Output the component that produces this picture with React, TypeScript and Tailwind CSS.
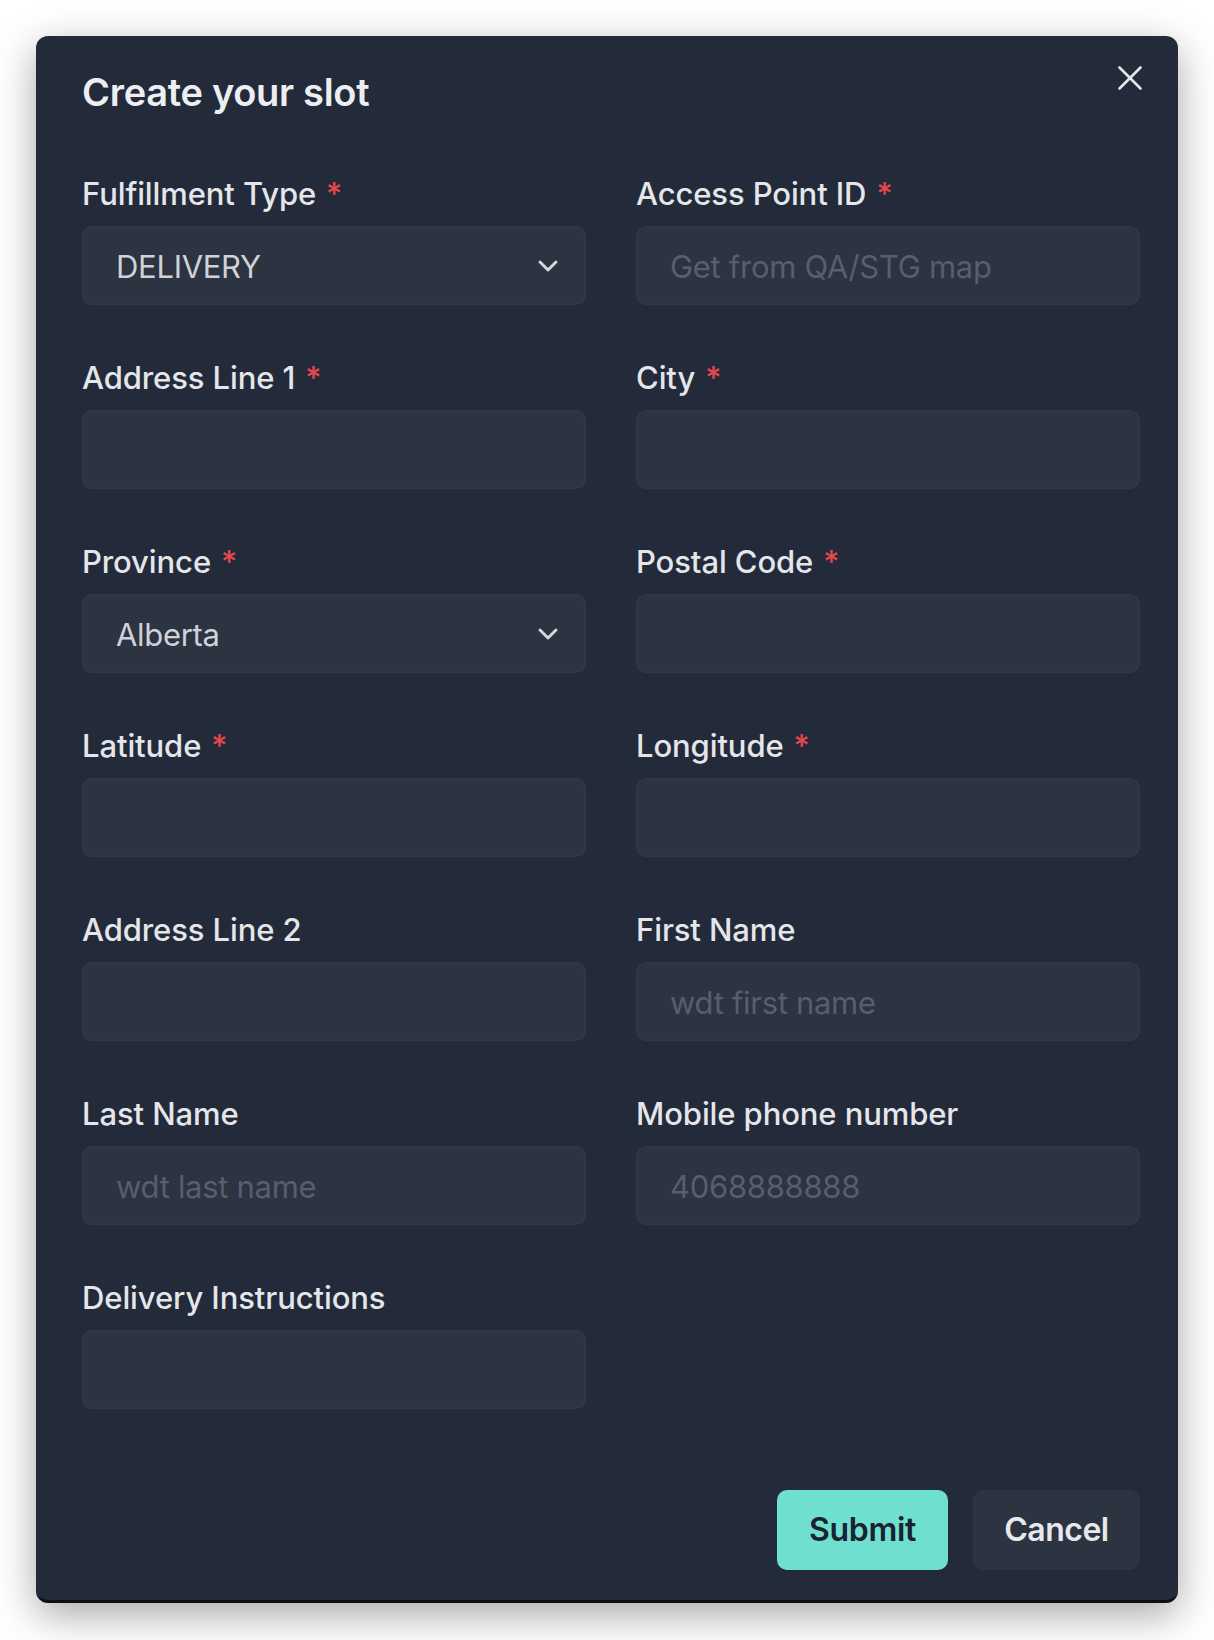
import React from "react";

const FONT = { fontFamily: "Inter, 'Noto Sans', sans-serif" };

function Label({ text, required }: { text: string; required?: boolean }) {
  return (
    <div className="h-[40px] leading-[40px] text-[31px] tracking-[-0.1px] font-medium text-[#e4e6ea] mb-[12px] whitespace-nowrap">
      {text}
      {required && <span className="ml-[10px] text-[#e5484d]">*</span>}
    </div>
  );
}

function Chevron() {
  return (
    <svg width="22" height="14" viewBox="0 0 22 14" className="absolute right-[25px] top-[31px]">
      <polyline points="3,3 11,11 19,3" fill="none" stroke="#d3d6dc" strokeWidth="3" strokeLinecap="round" strokeLinejoin="round" />
    </svg>
  );
}

function Field({
  label,
  required,
  value,
  placeholder,
  select,
}: {
  label: string;
  required?: boolean;
  value?: string;
  placeholder?: string;
  select?: boolean;
}) {
  return (
    <div className="flex flex-col">
      <Label text={label} required={required} />
      <div className="relative h-[79px] rounded-[10px] bg-[#2c3341] border-2 border-[#30374a] flex items-center pl-[32px] pt-[3px] text-[31px] tracking-[-0.3px]">
        {value && <span className="text-[#cfd2d8]">{value}</span>}
        {placeholder && <span className="text-[#575e6e]">{placeholder}</span>}
        {select && <Chevron />}
      </div>
    </div>
  );
}

export default function App() {
  return (
    <div className="w-[1214px] h-[1640px] bg-white pt-[36px] pl-[36px]" style={FONT}>
      <div className="relative w-[1142px] h-[1567px] rounded-[12px] bg-[#232a3a] border-b-[3px] border-[#0c0f15] shadow-[0_12px_40px_rgba(0,0,0,0.35)] pl-[46px] pr-[38px] pt-[32px] flex flex-col">
        <div className="text-[38px] leading-[48px] tracking-[-0.3px] font-semibold text-[#eceef1]">Create your slot</div>
        <button className="absolute right-[36px] top-[30px] w-[24px] h-[24px]">
          <svg width="24" height="24" viewBox="0 0 24 24">
            <path d="M1.5 1.5 L22.5 22.5 M22.5 1.5 L1.5 22.5" stroke="#e4e6ea" strokeWidth="2.6" strokeLinecap="round" />
          </svg>
        </button>
        <div className="mt-[58px] grid grid-cols-[504px_504px] gap-x-[50px] gap-y-[53px]">
          <Field label="Fulfillment Type" required value="DELIVERY" select />
          <Field label="Access Point ID" required placeholder="Get from QA/STG map" />
          <Field label="Address Line 1" required />
          <Field label="City" required />
          <Field label="Province" required value="Alberta" select />
          <Field label="Postal Code" required />
          <Field label="Latitude" required />
          <Field label="Longitude" required />
          <Field label="Address Line 2" />
          <Field label="First Name" placeholder="wdt first name" />
          <Field label="Last Name" placeholder="wdt last name" />
          <Field label="Mobile phone number" placeholder="4068888888" />
          <Field label="Delivery Instructions" />
        </div>
        <div className="mt-[81px] flex justify-end gap-[25px]">
          <button className="w-[171px] h-[80px] rounded-[10px] bg-[#6fe0cf] text-[#1a2130] text-[32px] font-semibold tracking-[-0.3px]">
            Submit
          </button>
          <button className="w-[167px] h-[80px] rounded-[10px] bg-[#2c3341] text-[#e6e8ec] text-[32px] font-semibold tracking-[-0.5px]">
            Cancel
          </button>
        </div>
      </div>
    </div>
  );
}
